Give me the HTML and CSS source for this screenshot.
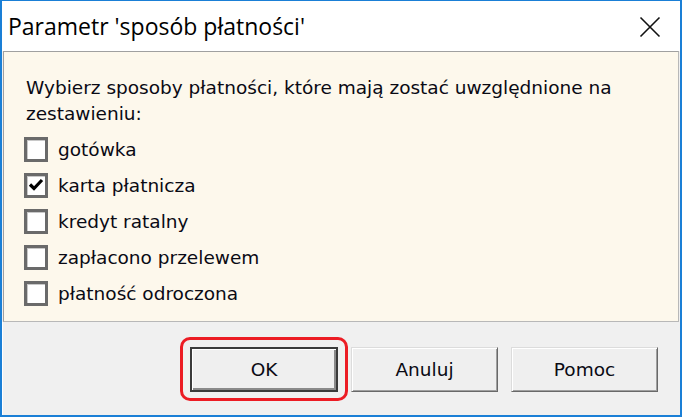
FILE: index.html
```html
<!DOCTYPE html>
<html lang="pl">
<head>
<meta charset="utf-8">
<title>Parametr 'sposób płatności'</title>
<link rel="stylesheet" href="styles.css">
</head>
<body>
<div class="window">
  <div class="titlebar">
    <span class="title">Parametr 'sposób płatności'</span>
    <svg class="close" width="22" height="22" viewBox="0 0 22 22" aria-hidden="true">
      <path d="M1.5 1.5 L20.5 20.5 M20.5 1.5 L1.5 20.5" stroke="#111" stroke-width="1.6" fill="none"/>
    </svg>
  </div>
  <div class="panel">
    <p class="intro">Wybierz sposoby płatności, które mają zostać uwzględnione na zestawieniu:</p>
    <ul class="options">
      <li class="option"><span class="box"></span><span class="label">gotówka</span></li>
      <li class="option"><span class="box checked"><svg width="18" height="18" viewBox="0 0 18 18" aria-hidden="true"><path d="M3 8.5 L7 12.5 L15 4" stroke="#000" stroke-width="3.2" fill="none"/></svg></span><span class="label">karta płatnicza</span></li>
      <li class="option"><span class="box"></span><span class="label">kredyt ratalny</span></li>
      <li class="option"><span class="box"></span><span class="label">zapłacono przelewem</span></li>
      <li class="option"><span class="box"></span><span class="label">płatność odroczona</span></li>
    </ul>
  </div>
  <div class="footer">
    <button class="btn btn-default">OK<span class="highlight"></span></button>
    <button class="btn">Anuluj</button>
    <button class="btn">Pomoc</button>
  </div>
</div>
</body>
</html>
```
FILE: styles.css
```css
html, body {
  margin: 0;
  padding: 0;
  width: 682px;
  height: 417px;
  overflow: hidden;
  background: #ffffff;
}

.window {
  box-sizing: border-box;
  width: 682px;
  height: 417px;
  border: 2px solid #1a7fd6;
  border-top-width: 1px;
  display: flex;
  flex-direction: column;
  background: #f0f0f0;
  font-family: "DejaVu Sans", Verdana, sans-serif;
  color: #0a0a14;
}

.titlebar {
  height: 50px;
  flex: none;
  display: flex;
  align-items: center;
  justify-content: space-between;
  padding: 0 19px 0 6px;
  background: #ffffff;
}

.title {
  font-family: "Open Sans", "Noto Sans", sans-serif;
  font-size: 23px;
  color: #000;
}

.close {
  display: block;
  margin-top: 2px;
}

.panel {
  flex: none;
  height: 271px;
  box-sizing: border-box;
  margin: 0 1px 0 1px;
  border: 1px solid #a0a0a0;
  border-right-color: #b8b8b8;
  border-bottom-color: #b8b8b8;
  background: #fdf8ec;
  padding: 23px 20px 0 20px;
}

.intro {
  margin: 0 0 4px 2px;
  font-size: 18.5px;
  line-height: 26px;
}

.options {
  list-style: none;
  margin: 0;
  padding: 0;
}

.option {
  height: 36px;
  display: flex;
  align-items: center;
  gap: 10px;
  font-size: 18.5px;
}

.box {
  box-sizing: border-box;
  width: 24px;
  height: 25px;
  border: 3px solid #6a6a6a;
  box-shadow: inset 1px 1px 0 #c8c8c8;
  background: #ffffff;
  display: flex;
  align-items: center;
  justify-content: center;
}

.box svg {
  display: block;
}

.footer {
  flex: 1;
  display: flex;
  justify-content: flex-end;
  align-items: flex-start;
  gap: 13px;
  padding: 25px 22px 0 0;
  background: #f0f0f0;
  border-left: 1px solid #ffffff;
}

.btn {
  position: relative;
  box-sizing: border-box;
  width: 147px;
  height: 45px;
  font-family: "DejaVu Sans", Verdana, sans-serif;
  font-size: 18.5px;
  color: #0a0a14;
  background: #efefef;
  border: 1px solid;
  border-color: #dcdcdc #696969 #696969 #dcdcdc;
  box-shadow: inset 1px 1px 0 #ffffff, inset -1px -1px 0 #a0a0a0;
  padding: 0;
}

.btn-default {
  width: 148px;
  border: 2px solid #3a3a3a;
  box-shadow: inset 1px 1px 0 #ffffff, inset -2px -2px 0 #8a8a8a;
}

.highlight {
  position: absolute;
  left: -12px;
  top: -12px;
  right: -12px;
  bottom: -11px;
  border: 3px solid #ec1c24;
  border-radius: 10px;
  pointer-events: none;
}
```
